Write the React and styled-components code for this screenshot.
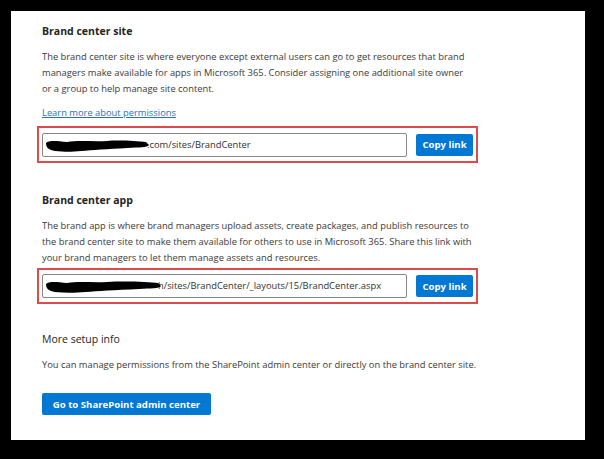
import React from 'react';
import styled, { createGlobalStyle } from 'styled-components';

const GlobalStyle = createGlobalStyle`
  html, body {
    margin: 0;
    padding: 0;
    background: #000;
  }
  body {
    font-family: 'Open Sans', 'Noto Sans', sans-serif;
    -webkit-font-smoothing: antialiased;
  }
`;

const Frame = styled.div`
  width: 604px;
  height: 459px;
  padding: 11px 0 0 11px;
  box-sizing: border-box;
`;

const Panel = styled.div`
  width: 574px;
  height: 429px;
  background: #fff;
  box-sizing: border-box;
  padding: 13px 0 0 31px;
  color: #3b3a39;
  font-size: 9.35px;
  line-height: 16px;
`;

const Section = styled.section`
  margin-bottom: ${(p) => p.$gap || 0}px;
`;

const Heading = styled.h2`
  margin: 0 0 11px;
  height: 14px;
  font-size: 10.5px;
  line-height: 14px;
  font-weight: ${(p) => (p.$light ? 400 : 700)};
  color: #242424;
`;

const Text = styled.p`
  margin: 0;
  white-space: nowrap;
`;

const Link = styled.a`
  display: block;
  width: max-content;
  margin-top: 8px;
  color: #2b6fc0;
  text-decoration: underline;
`;

const Highlight = styled.div`
  display: flex;
  align-items: center;
  gap: 9px;
  width: 441px;
  height: ${(p) => p.$h}px;
  box-sizing: border-box;
  border: 2px solid #df4b4b;
  padding: 0 3px;
  margin: ${(p) => p.$top}px 0 0 -5px;
`;

const Field = styled.div`
  position: relative;
  display: flex;
  align-items: center;
  flex: none;
  width: 365px;
  height: 24px;
  box-sizing: border-box;
  border: 1px solid #8a8886;
  border-radius: 2px;
  padding-left: 2px;
  overflow: hidden;
  font-size: 9.35px;
  color: #323130;
`;

const Redaction = styled.svg`
  flex: none;
  width: ${(p) => p.$w}px;
  height: 16px;
  margin-right: ${(p) => p.$overlap || 0}px;
  position: relative;
  z-index: 1;
`;

const PrimaryButton = styled.button`
  display: block;
  flex: none;
  border: none;
  border-radius: 2px;
  background: #0078d4;
  color: #fff;
  font-family: inherit;
  font-weight: 700;
  font-size: 9.6px;
  height: 22px;
  width: ${(p) => p.$w}px;
  margin-top: ${(p) => p.$top || 0}px;
  padding: 0;
  cursor: pointer;
  white-space: nowrap;
`;

// hand-drawn marker scribble hiding the tenant name
const Redacted = ({ width, overlap }) => {
  const w = width;
  return (
    <Redaction $w={w} $overlap={overlap} viewBox={`0 0 ${w} 16`}>
      <path
        d={`M1 6 C 4 3, 12 4, 22 5 C 34 3, 48 5, 62 4 C ${w * 0.7} 3, ${w - 12} 4, ${w - 3} 5
            L ${w} 8 C ${w - 2} 11, ${w - 10} 10, ${w - 22} 11
            C ${w * 0.6} 12, ${w * 0.45} 13, ${w * 0.35} 14
            C ${w * 0.25} 15, 20 15, 10 14 C 4 13, 1 11, 1 6 Z`}
        fill="#000"
      />
    </Redaction>
  );
};

const LinkRow = ({ redact, overlap, url, top, height }) => (
  <Highlight $top={top} $h={height}>
    <Field>
      <Redacted width={redact} overlap={overlap} />
      <span>{url}</span>
    </Field>
    <PrimaryButton $w={57}>Copy link</PrimaryButton>
  </Highlight>
);

export default function App() {
  return (
    <>
      <GlobalStyle />
      <Frame>
        <Panel>
          <Section $gap={30}>
            <Heading>Brand center site</Heading>
            <Text>
              The brand center site is where everyone except external users can go to get resources that brand
              <br />
              managers make available for apps in Microsoft 365. Consider assigning one additional site owner
              <br />
              or a group to help manage site content.
            </Text>
            <Link href="#">Learn more about permissions</Link>
            <LinkRow top={5} height={37} redact={104} overlap={-2} url=".com/sites/BrandCenter" />
          </Section>
          <Section $gap={28}>
            <Heading>Brand center app</Heading>
            <Text>
              The brand app is where brand managers upload assets, create packages, and publish resources to
              <br />
              the brand center site to make them available for others to use in Microsoft 365. Share this link with
              <br />
              your brand managers to let them manage assets and resources.
            </Text>
            <LinkRow top={2} height={36} redact={116} overlap={-3} url="h/sites/BrandCenter/_layouts/15/BrandCenter.aspx" />
          </Section>
          <Section>
            <Heading $light>More setup info</Heading>
            <Text>You can manage permissions from the SharePoint admin center or directly on the brand center site.</Text>
            <PrimaryButton $w={169} $top={20}>
              Go to SharePoint admin center
            </PrimaryButton>
          </Section>
        </Panel>
      </Frame>
    </>
  );
}
